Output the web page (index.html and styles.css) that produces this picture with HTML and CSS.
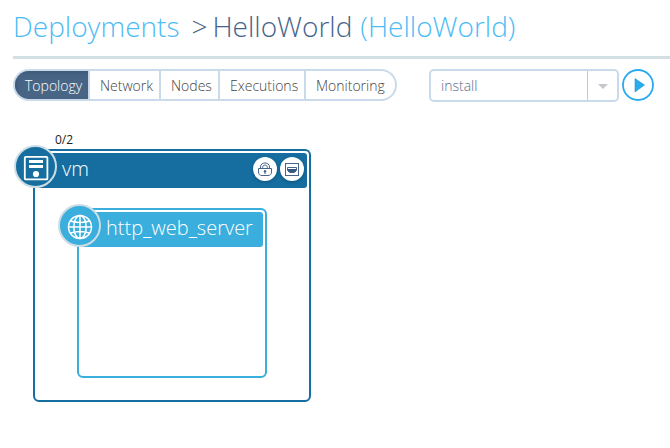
FILE: index.html
```
<!DOCTYPE html>
<html lang="en">
<head>
<meta charset="utf-8">
<title>Deployments</title>
<link rel="stylesheet" href="styles.css">
</head>
<body>
<header class="page-head">
  <h1 class="title"><a class="crumb">Deployments</a><span class="sep">&gt;</span><span class="name">HelloWorld</span><span class="blueprint">(HelloWorld)</span></h1>
</header>
<div class="toolbar">
  <nav class="tabs">
    <a class="tab tab-topology active">Topology</a>
    <a class="tab tab-network">Network</a>
    <a class="tab tab-nodes">Nodes</a>
    <a class="tab tab-executions">Executions</a>
    <a class="tab tab-monitoring">Monitoring</a>
  </nav>
  <div class="select"><span class="value">install</span><span class="arrow"><svg width="10" height="5" viewBox="0 0 10 5"><path d="M0 0H10L5 5Z" fill="#c4c8cc"/></svg></span></div>
  <button class="play" aria-label="Run"><svg width="32" height="32" viewBox="0 0 32 32"><circle cx="16" cy="16" r="15" fill="#fff" stroke="#29abee" stroke-width="1.8"/><path d="M13 9.5L22.5 16L13 23Z" fill="#29abee" stroke="#1d97dc" stroke-width=".6"/></svg></button>
</div>
<main class="canvas">
  <section class="node vm">
    <span class="count">0/2</span>
    <div class="bar"><span class="label">vm</span>
      <span class="chips">
        <span class="chip"><svg width="24" height="24" viewBox="0 0 24 24" fill="none" stroke="#46658a" stroke-width="1"><path d="M7.5 11.5V10C7.5 4.6 16.5 4.6 16.5 10V11.5M9.7 11.5V10.2C9.7 7.4 14.3 7.4 14.3 10.2V11.5"/><path d="M5.5 11.5H18.5V15C18.5 17.5 17 18.5 15 18.5H9C7 18.5 5.5 17.5 5.5 15Z"/><circle cx="12" cy="14.2" r="1.2" fill="#46658a" stroke="none"/><path d="M12 14V17"/></svg></span>
        <span class="chip"><svg width="24" height="24" viewBox="0 0 24 24"><rect x="5.5" y="6.5" width="13" height="12" fill="#fff" stroke="#46658a"/><path d="M7.5 10.5H16.5V13.5L14.5 15.5H9.5L7.5 13.5Z" fill="#fff" stroke="#46658a"/><path d="M8 12H16V13.5L14.3 15.3H9.7L8 13.5Z" fill="#35577e"/></svg></span>
      </span>
    </div>
    <span class="badge"><svg width="43" height="43" viewBox="0 0 43 43"><rect x="10.8" y="11.8" width="22.6" height="22.6" rx="1" fill="none" stroke="#fff" stroke-width="1.8"/><path d="M15 15H29V18H15ZM15 20H29V23H15Z" fill="#fff"/><circle cx="22" cy="29" r="3.1" fill="#fff"/></svg></span>
    <section class="node web">
      <div class="bar"><span class="label">http_web_server</span></div>
      <span class="badge"><svg width="43" height="43" viewBox="0 0 43 43" fill="none" stroke="#fff" stroke-width="1.5"><circle cx="22" cy="23" r="11.5"/><ellipse cx="22" cy="23" rx="6.2" ry="11.5"/><path d="M22 11.5V34.5M10.5 23H33.5M12.5 17Q22 20 31.5 17M12.5 29Q22 26 31.5 29"/></svg></span>
    </section>
  </section>
</main>
</body>
</html>
```
FILE: styles.css
```
* { box-sizing: border-box; }
body {
  margin: 0;
  height: 448px;
  overflow: hidden;
  background: #fff;
  color: #444;
  font-family: "Open Sans", sans-serif;
  font-weight: 300;
}
.page-head {
  height: 59px;
  margin-left: 13px;
  border-bottom: 3px solid #d3dfe3;
}
.title {
  display: flex;
  margin: 0;
  padding-top: 7px;
  font-size: 28px;
  font-weight: 300;
  line-height: 38px;
  white-space: nowrap;
  color: #46648a;
}
.crumb, .blueprint { color: #4dbcf5; }
.sep { margin-left: 12px; }
.name { margin-left: 5px; }
.blueprint { margin-left: 8px; }
.toolbar {
  display: flex;
  align-items: flex-start;
  padding: 10px 0 0 13px;
}
.tabs {
  display: flex;
  width: 384px;
  height: 32px;
  border: 2px solid #c9daea;
  border-radius: 16px;
  overflow: hidden;
  font-size: 14px;
  line-height: 29px;
}
.tab { padding-left: 10px; border-right: 2px solid #c9daea; white-space: nowrap; }
.tab-topology { width: 75px; }
.tab-network { width: 71px; }
.tab-nodes { width: 59px; }
.tab-executions { width: 86px; }
.tab-monitoring { flex: 1; border-right: 0; }
.active {
  background: #486586;
  color: #fff;
  box-shadow: inset 2px 2px 4px #3d5878;
}
.select {
  display: flex;
  width: 190px;
  height: 33px;
  margin-left: 32px;
  border: 2px solid #c9daea;
  border-radius: 5px;
  font-size: 14px;
  line-height: 29px;
  color: #56708f;
}
.value { flex: 1; padding-left: 10px; }
.arrow {
  display: flex;
  align-items: center;
  justify-content: center;
  width: 30px;
  padding-top: 1px;
  border-left: 1px solid #c5c9cc;
}
.play { width: 32px; height: 32px; margin-left: 3px; padding: 0; border: 0; background: none; }
svg { display: block; }
.canvas { position: relative; }
.node {
  position: absolute;
  padding: 2px;
  border: 2px solid var(--tone);
  border-radius: 6px;
}
.vm { --tone: #156e9f; left: 33px; top: 47px; width: 278px; height: 253px; }
.web { --tone: #3aaedc; left: 42px; top: 57px; width: 190px; height: 170px; }
.bar {
  display: flex;
  align-items: center;
  justify-content: space-between;
  height: 35px;
  padding: 0 3px 0 25px;
  border-radius: 3px;
  background: var(--tone);
  color: #fff;
}
.label { font-size: 20px; line-height: 30px; padding-bottom: 3px; }
.chips { display: flex; gap: 3px; padding-bottom: 3px; }
.chip { width: 24px; height: 24px; border-radius: 50%; background: #fff; box-shadow: 0 1px 3px #0d527a; }
.badge {
  position: absolute;
  left: -21px;
  top: -6px;
  width: 43px;
  height: 43px;
  border: 2px solid #ccdde5;
  border-radius: 50%;
  background: var(--tone);
}
.badge svg { margin: -2px; }
.count {
  position: absolute;
  left: 20px;
  top: -19px;
  font-size: 12px;
  font-weight: 400;
  line-height: 16px;
  color: #222;
}
```
